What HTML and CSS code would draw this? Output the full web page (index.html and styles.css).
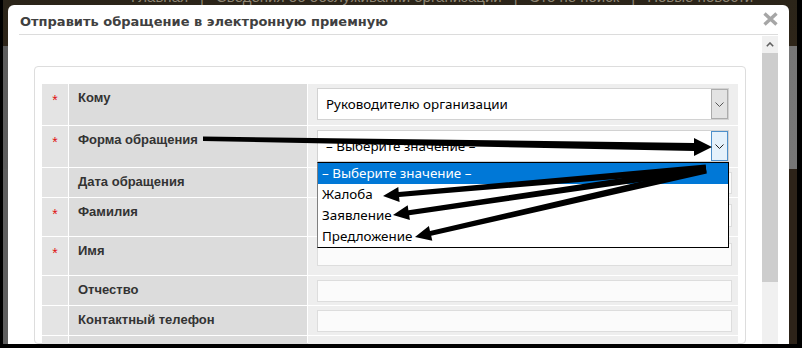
FILE: index.html
```html
<!DOCTYPE html>
<html lang="ru">
<head>
    <meta charset="UTF-8">
    <meta name="viewport" content="width=device-width, initial-scale=1.0">
    <title>Электронная приемная</title>
    <link rel="stylesheet" href="styles.css">
</head>
<body>

    <div class="page">
        <div class="nav">
            <span>Главная</span><span class="sep">|</span><span>Сведения об обслуживании организации</span><span class="sep">|</span><span>Это не поиск</span><span class="sep">|</span><span>Новые новости</span>
        </div>
        <div class="hero"></div>
        <div class="band"></div>

        <div class="modal">
            <div class="modal-head">
                <h3 class="modal-title">Отправить обращение в электронную приемную</h3>
                <svg class="close" width="15" height="14" viewBox="0 0 15 14">
                    <path d="M1.5 1.5 L13.5 12.5 M13.5 1.5 L1.5 12.5" stroke="#a6a6a6" stroke-width="3.4" fill="none"/>
                </svg>
            </div>
            <div class="modal-body">
                <div class="content">
                    <div class="fieldset">
                        <div class="rows">
                            <div class="row row-select">
                                <div class="star">*</div>
                                <div class="label">Кому</div>
                                <div class="field">
                                    <div class="select">
                                        <span class="select-text">Руководителю организации</span>
                                        <span class="select-btn">
                                            <svg width="9" height="5" viewBox="0 0 9 5"><path d="M0.5 0.5 L4.5 4.5 L8.5 0.5" fill="none" stroke="#555"/></svg>
                                        </span>
                                    </div>
                                </div>
                            </div>
                            <div class="row row-select">
                                <div class="star">*</div>
                                <div class="label">Форма обращения</div>
                                <div class="field">
                                    <div class="select">
                                        <span class="select-text">– Выберите значение –</span>
                                        <span class="select-btn active">
                                            <svg width="9" height="5" viewBox="0 0 9 5"><path d="M0.5 0.5 L4.5 4.5 L8.5 0.5" fill="none" stroke="#222"/></svg>
                                        </span>
                                    </div>
                                    <ul class="listbox">
                                        <li class="selected">– Выберите значение –</li>
                                        <li>Жалоба</li>
                                        <li>Заявление</li>
                                        <li>Предложение</li>
                                    </ul>
                                </div>
                            </div>
                            <div class="row row-sm">
                                <div class="star"></div>
                                <div class="label">Дата обращения</div>
                                <div class="field"><div class="input"></div></div>
                            </div>
                            <div class="row row-req">
                                <div class="star">*</div>
                                <div class="label">Фамилия</div>
                                <div class="field"><div class="input input-req"></div></div>
                            </div>
                            <div class="row row-req">
                                <div class="star">*</div>
                                <div class="label">Имя</div>
                                <div class="field"><div class="input input-req"></div></div>
                            </div>
                            <div class="row row-sm">
                                <div class="star"></div>
                                <div class="label">Отчество</div>
                                <div class="field"><div class="input"></div></div>
                            </div>
                            <div class="row row-sm">
                                <div class="star"></div>
                                <div class="label">Контактный телефон</div>
                                <div class="field"><div class="input"></div></div>
                            </div>
                            <div class="row row-sm">
                                <div class="star"></div>
                                <div class="label"></div>
                                <div class="field"></div>
                            </div>
                        </div>
                    </div>
                </div>
                <div class="scrollbar">
                    <div class="scroll-up">
                        <svg width="8" height="5" viewBox="0 0 8 5"><path d="M0.8 4.2 L4 1 L7.2 4.2" fill="none" stroke="#606060" stroke-width="1.6"/></svg>
                    </div>
                    <div class="scroll-thumb"></div>
                    <div class="scroll-track"></div>
                </div>
            </div>
        </div>
    </div>

    <!-- annotation arrows drawn over the screenshot -->
    <svg class="arrows" width="802" height="348" viewBox="0 0 802 348">
        <polygon points="203,136.5 694,143 694,138 712,147 694,156 694,151 203,141"/>
        <polygon points="705.7,164.5 398.7,192.1 398.3,187.1 383,196 399.6,202.1 399.1,197.1 706.3,171.5"/>
        <polygon points="705.5,165.5 408.4,210.2 407.7,205.3 393,215 409.9,220.1 409.2,215.2 706.5,172.5"/>
        <polygon points="705.2,166.6 430.0,231.0 428.9,226.1 415,237 432.3,240.7 431.2,235.8 706.8,173.4"/>
    </svg>

</body>
</html>
```

FILE: styles.css
```css
body {
    margin: 0;
    background-color: #000;
    width: 802px;
    height: 348px;
    overflow: hidden;
    position: relative;
}
.page {
    position: relative;
    margin-left: 3px;
    width: 794px;
    height: 344px;
    background-color: #2b2319;
    overflow: hidden;
}
.nav {
    height: 57px;
    margin-top: -11px;
    padding-left: 128px;
    font-family: "Liberation Sans", Arial, sans-serif;
    font-size: 15px;
    line-height: 16px;
    color: #8f8674;
    white-space: nowrap;
    background: linear-gradient(#2a2419, #2e2519);
}
.nav .sep {
    margin: 0 12px;
}
.hero {
    height: 123px;
    background: linear-gradient(to right, #5d5d5d, #767676);
}
.band {
    height: 180px;
    background: linear-gradient(to right, #5f5f5f 5px, #2d2319 5px);
}

.modal {
    position: absolute;
    left: 5px;
    top: 5px;
    width: 781px;
    height: 339px;
    box-sizing: border-box;
    padding: 0 11px;
    background: #fff;
    border-radius: 6px 6px 0 0;
    display: flex;
    flex-direction: column;
}
.modal-head {
    height: 30px;
    box-sizing: border-box;
    border-bottom: 1px solid #dcdcdc;
    display: flex;
    justify-content: space-between;
    align-items: flex-start;
    padding: 9px 0 0 1px;
}
.modal-title {
    margin: 0;
    font-family: "DejaVu Sans", Verdana, sans-serif;
    font-size: 13px;
    line-height: 16px;
    font-weight: bold;
    color: #404040;
}
.close {
    margin-top: -2px;
}
.modal-body {
    flex: 1;
    display: flex;
    min-height: 0;
}
.content {
    flex: 1;
    padding: 31px 16px 0 15px;
}
.fieldset {
    border: 1px solid #dddddd;
    border-radius: 4px;
    padding: 17px 7px 0 7px;
    height: 100%;
    box-sizing: border-box;
}
.rows {
    display: flex;
    flex-direction: column;
    gap: 1px;
}
.row {
    display: grid;
    grid-template-columns: 26px 238px 1fr;
    column-gap: 1px;
}
.row-select { height: 41px; }
.row-sm { height: 29px; }
.row-req { height: 38px; }

.star {
    background: #e4e4e4;
    color: #e01010;
    text-align: center;
    font-family: "Liberation Sans", Arial, sans-serif;
    font-size: 14px;
    line-height: 16px;
    padding-top: 8px;
}
.label {
    background: #dcdcdc;
    padding: 6px 0 0 9px;
    font-family: "Liberation Sans", Arial, sans-serif;
    font-size: 13px;
    line-height: 16px;
    font-weight: bold;
    color: #333;
}
.field {
    background: #eeeeee;
    position: relative;
}
.select {
    display: flex;
    width: 412px;
    height: 32px;
    box-sizing: border-box;
    margin: 4px 0 0 9px;
    border: 1px solid #d2d2d2;
    background: #fff;
    font-family: "Noto Sans", "Open Sans", sans-serif;
    font-size: 13.4px;
    color: #000;
}
.select-text {
    flex: 1;
    padding-left: 8px;
    line-height: 30px;
}
.select-btn {
    width: 17px;
    box-sizing: border-box;
    border: 1px solid #acacac;
    background: #e3e3e3;
    display: flex;
    align-items: center;
    justify-content: center;
}
.select-btn.active {
    border-color: #4d8fca;
    background: #e5f1fb;
}
.input {
    width: 415px;
    height: 22px;
    box-sizing: border-box;
    margin: 4px 0 0 9px;
    border: 1px solid #dddddd;
    background: #fbfbfb;
}
.input-req {
    margin-top: 6px;
    height: 23px;
}
.listbox {
    position: absolute;
    left: 9px;
    top: 36px;
    width: 412px;
    box-sizing: border-box;
    margin: 0;
    padding: 0;
    list-style: none;
    background: #fff;
    border: 1px solid #000;
    border-left-color: #808080;
    font-family: "Noto Sans", "Open Sans", sans-serif;
    font-size: 13.4px;
    color: #000;
    z-index: 2;
}
.listbox li {
    height: 21px;
    line-height: 21px;
    padding-left: 4px;
}
.listbox li.selected {
    background: #0078d7;
    color: #fff;
}

.scrollbar {
    width: 16px;
    margin-top: 1px;
    display: flex;
    flex-direction: column;
}
.scroll-up {
    height: 17px;
    background: #f0f0f0;
    display: flex;
    align-items: center;
    justify-content: center;
}
.scroll-thumb {
    height: 229px;
    background: #cdcdcd;
}
.scroll-track {
    flex: 1;
    background: #f0f0f0;
}

.arrows {
    position: absolute;
    left: 0;
    top: 0;
    z-index: 10;
    pointer-events: none;
}
.arrows polygon {
    fill: #000;
}
```
